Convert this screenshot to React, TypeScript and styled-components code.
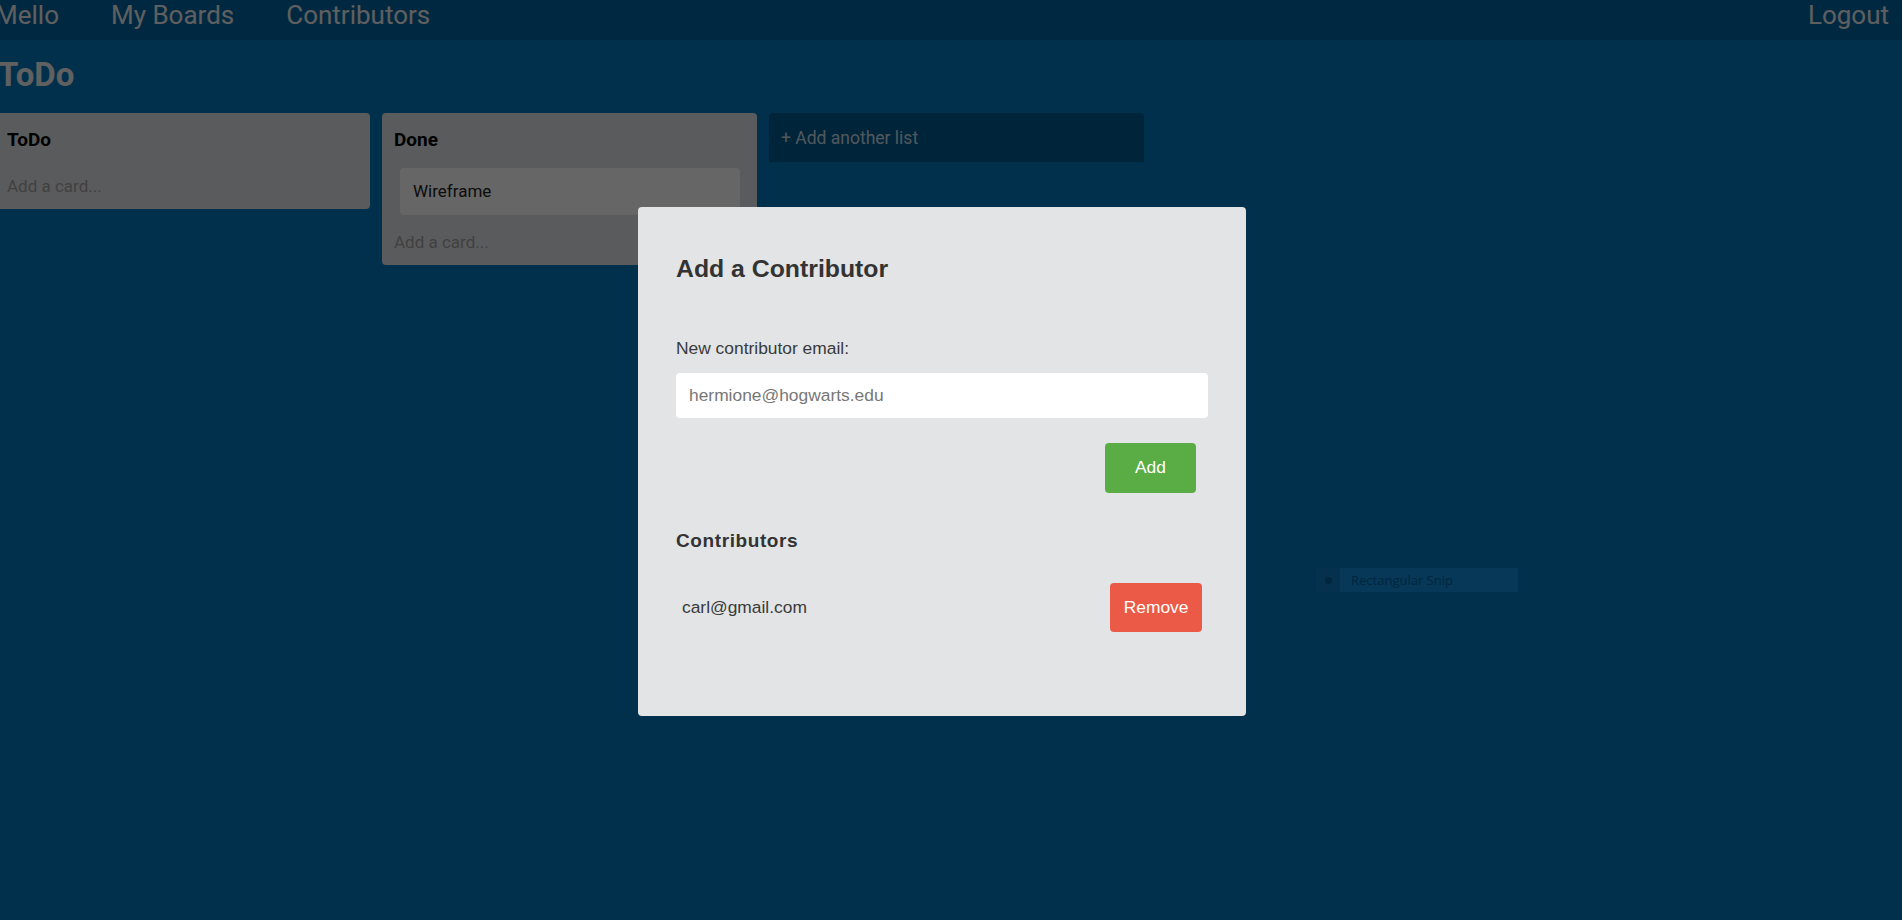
import styled, { createGlobalStyle } from "styled-components";
import { useState } from "react";

type List = { id: number; title: string; cards: string[] };

const LISTS: List[] = [
  { id: 1, title: "ToDo", cards: [] },
  { id: 2, title: "Done", cards: ["Wireframe"] },
];

export default function App() {
  const [email, setEmail] = useState<string>("");
  const [contributors, setContributors] = useState<string[]>(["carl@gmail.com"]);

  const handleAdd = () => {
    if (!email) return;
    setContributors([...contributors, email]);
    setEmail("");
  };

  return (
    <>
      <GlobalStyle />
      <Page>
        <NavBar>
          <NavLink>Mello</NavLink>
          <NavLink>My Boards</NavLink>
          <NavLink>Contributors</NavLink>
          <Logout>Logout</Logout>
        </NavBar>
        <Board>
          <BoardTitle>ToDo</BoardTitle>
          <Lists>
            {LISTS.map((list) => (
              <ListColumn key={list.id}>
                <ListTitle>{list.title}</ListTitle>
                {list.cards.map((card) => (
                  <Card key={card}>{card}</Card>
                ))}
                <AddCard>Add a card...</AddCard>
              </ListColumn>
            ))}
            <AddList>+ Add another list</AddList>
          </Lists>
        </Board>
      </Page>

      <Overlay>
        <Modal>
          <ModalTitle>Add a Contributor</ModalTitle>
          <Label htmlFor="contributor-email">New contributor email:</Label>
          <EmailInput
            id="contributor-email"
            type="email"
            placeholder="hermione@hogwarts.edu"
            value={email}
            onChange={(e) => setEmail(e.target.value)}
          />
          <AddRow>
            <ActionButton $tone="add" $width={91} $height={50} onClick={handleAdd}>
              Add
            </ActionButton>
          </AddRow>
          <SectionTitle>Contributors</SectionTitle>
          {contributors.map((c) => (
            <ContributorRow key={c}>
              <span>{c}</span>
              <ActionButton
                $tone="remove"
                $height={49}
                onClick={() => setContributors(contributors.filter((x) => x !== c))}
              >
                Remove
              </ActionButton>
            </ContributorRow>
          ))}
        </Modal>
        <SnipTip>
          <SnipIcon />
          <SnipLabel>Rectangular Snip</SnipLabel>
        </SnipTip>
      </Overlay>
    </>
  );
}

const GlobalStyle = createGlobalStyle`
  html, body {
    margin: 0;
    padding: 0;
    overflow: hidden;
  }
  body {
    font-family: Roboto, "Liberation Sans", sans-serif;
  }
  * {
    box-sizing: border-box;
  }
`;

const Page = styled.div`
  margin-left: -5px;
  width: calc(100% + 5px);
  min-height: 100vh;
  background-color: #0079bf;
  display: flex;
  flex-direction: column;
`;

const NavBar = styled.nav`
  height: 40px;
  background-color: #0266a2;
  display: flex;
  align-items: flex-start;
  gap: 52px;
`;

const NavLink = styled.a`
  font-family: Roboto, sans-serif;
  font-size: 26px;
  line-height: normal;
  color: #eeeeee;
  cursor: pointer;
`;

const Logout = styled(NavLink)`
  margin-left: auto;
  margin-right: 13px;
`;

const Board = styled.main`
  flex: 1;
  display: flex;
  flex-direction: column;
`;

const BoardTitle = styled.h1`
  margin: 15px 0 19px 3px;
  font-family: Roboto, sans-serif;
  font-size: 33px;
  font-weight: 700;
  line-height: normal;
  color: #f0f0f0;
`;

const Lists = styled.div`
  display: flex;
  align-items: flex-start;
  gap: 12px;
`;

const ListColumn = styled.section`
  width: 375px;
  flex-shrink: 0;
  background-color: #e2e4e6;
  border-radius: 4px;
  padding: 0 12px 13px;
  display: flex;
  flex-direction: column;
`;

const ListTitle = styled.h3`
  margin: 0;
  padding: 16px 0 8px;
  font-size: 19px;
  font-weight: 700;
  line-height: 22px;
  color: #000;
`;

const Card = styled.div`
  margin: 9px 5px 0 6px;
  padding: 13px;
  background-color: #ffffff;
  border-radius: 4px;
  font-size: 17px;
  line-height: 21px;
  color: #222;
`;

const AddCard = styled.div`
  margin-top: 17px;
  font-size: 17px;
  line-height: 20px;
  color: #a2a2a2;
  cursor: pointer;
`;

const AddList = styled.div`
  width: 375px;
  flex-shrink: 0;
  height: 49px;
  padding: 0 12px;
  display: flex;
  align-items: center;
  background-color: rgba(0, 0, 0, 0.25);
  border-radius: 4px 4px 0 0;
  font-size: 17.5px;
  color: rgba(255, 255, 255, 0.8);
  cursor: pointer;
`;

const Overlay = styled.div`
  position: fixed;
  inset: 0;
  background-color: rgba(0, 0, 0, 0.6);
  display: flex;
  align-items: center;
  justify-content: center;
  padding: 3px 18px 0 0;
`;

const Modal = styled.div`
  width: 608px;
  padding: 48px 38px 84px;
  background-color: #e2e4e6;
  border-radius: 4px;
  font-family: "Liberation Sans", Arial, sans-serif;
  color: #333;
  display: flex;
  flex-direction: column;
`;

const ModalTitle = styled.h2`
  margin: 0;
  font-size: 24.8px;
  font-weight: 700;
  line-height: 28px;
  color: #333;
`;

const Label = styled.label`
  margin-top: 55px;
  font-size: 17.4px;
  line-height: 20px;
  color: #3a3a3a;
`;

const EmailInput = styled.input`
  margin-top: 15px;
  height: 45px;
  width: 100%;
  padding: 0 13px;
  border: none;
  border-radius: 4px;
  background-color: #fff;
  font-family: "Liberation Sans", Arial, sans-serif;
  font-size: 17.4px;
  color: #333;
  outline: none;
  &::placeholder {
    color: #777;
  }
`;

const AddRow = styled.div`
  margin-top: 25px;
  display: flex;
  justify-content: flex-end;
  padding-right: 12px;
`;

const ActionButton = styled.button<{ $tone: "add" | "remove"; $width?: number; $height: number }>`
  width: ${(p) => (p.$width ? `${p.$width}px` : "auto")};
  height: ${(p) => p.$height}px;
  padding: 0 13.5px;
  border: none;
  border-radius: 4px;
  background-color: ${(p) => (p.$tone === "add" ? "#5aac44" : "#eb5a46")};
  color: #fff;
  font-family: "Liberation Sans", Arial, sans-serif;
  font-size: 17.4px;
  cursor: pointer;
`;

const SectionTitle = styled.h4`
  margin: 37.5px 0 0;
  font-size: 19px;
  font-weight: 700;
  line-height: 22px;
  letter-spacing: 0.6px;
  color: #333;
`;

const ContributorRow = styled.div`
  margin-top: 30.7px;
  padding: 0 6px;
  display: flex;
  align-items: center;
  justify-content: space-between;
  font-size: 17.4px;
  color: #3a3a3a;
`;

const SnipTip = styled.div`
  position: absolute;
  left: 1316px;
  top: 568px;
  width: 202px;
  height: 24px;
  display: flex;
  align-items: center;
  background-color: #073857;
`;

const SnipIcon = styled.div`
  width: 24px;
  height: 24px;
  background-color: #05314e;
  display: flex;
  align-items: center;
  justify-content: center;
  &::after {
    content: "";
    width: 7px;
    height: 7px;
    border-radius: 50%;
    background-color: #00263e;
  }
`;

const SnipLabel = styled.span`
  margin-left: 11px;
  font-family: "Open Sans", sans-serif;
  font-size: 13px;
  color: #00263e;
`;
